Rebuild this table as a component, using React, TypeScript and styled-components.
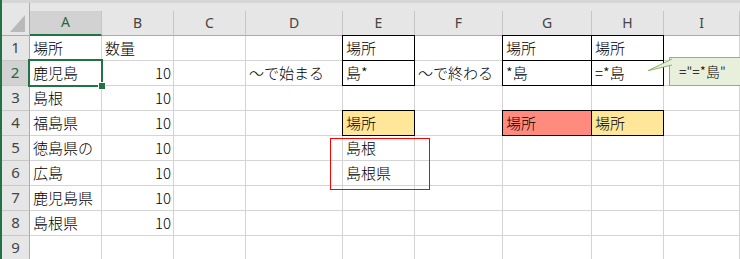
import React from "react";
import styled, { createGlobalStyle, css } from "styled-components";

const Global = createGlobalStyle`
  html, body { margin: 0; padding: 0; background: #fff; }
  body { font-family: "Noto Sans CJK JP", "Noto Sans", sans-serif; }
`;

type Fill = "yellow" | "red";
type CellSpec = { text?: string; num?: boolean; boxed?: boolean; fill?: Fill };

const COLUMNS = ["A", "B", "C", "D", "E", "F", "G", "H", "I"];
const SELECTED_COL = "A";
const SELECTED_ROW = 2;

const FILLS: Record<Fill, string> = {
  yellow: "#ffe699",
  red: "#ff8a7e",
};

// Sheet contents, one object per row keyed by column letter
const ROWS: Record<string, CellSpec>[] = [
  {
    A: { text: "場所" },
    B: { text: "数量" },
    E: { text: "場所", boxed: true },
    G: { text: "場所", boxed: true },
    H: { text: "場所", boxed: true },
  },
  {
    A: { text: "鹿児島" },
    B: { text: "10", num: true },
    D: { text: "～で始まる" },
    E: { text: "島*", boxed: true },
    F: { text: "～で終わる" },
    G: { text: "*島", boxed: true },
    H: { text: "=*島", boxed: true },
  },
  { A: { text: "島根" }, B: { text: "10", num: true } },
  {
    A: { text: "福島県" },
    B: { text: "10", num: true },
    E: { text: "場所", boxed: true, fill: "yellow" },
    G: { text: "場所", boxed: true, fill: "red" },
    H: { text: "場所", boxed: true, fill: "yellow" },
  },
  { A: { text: "徳島県の" }, B: { text: "10", num: true }, E: { text: "島根" } },
  { A: { text: "広島" }, B: { text: "10", num: true }, E: { text: "島根県" } },
  { A: { text: "鹿児島県" }, B: { text: "10", num: true } },
  { A: { text: "島根県" }, B: { text: "10", num: true } },
  {},
];

const Sheet = styled.div`
  position: relative;
  width: 740px;
  height: 259px;
  overflow: hidden;
  box-sizing: border-box;
  border-left: 2px solid #217346;
  background: #e6e6e6;
`;

const TopStrip = styled.div`
  height: 3px;
  background: #d6d6d6;
`;

const Grid = styled.div`
  position: relative;
  display: grid;
  grid-template-columns: 28px 72px 72px 72px 97px 72px 88px 89px 72px 1fr;
  grid-template-rows: 33px repeat(9, 25px);
`;

const Corner = styled.div`
  box-sizing: border-box;
  display: flex;
  align-items: flex-end;
  justify-content: flex-end;
  padding: 0 3px 3px 0;
  border-right: 1px solid #ababab;
  border-bottom: 1px solid #ababab;
`;

const ColHead = styled.div<{ $sel?: boolean }>`
  box-sizing: border-box;
  align-self: end;
  height: 25px;
  display: flex;
  align-items: center;
  justify-content: center;
  padding-bottom: 1px;
  font-family: "Noto Sans", "Noto Sans CJK JP", sans-serif;
  font-size: 14px;
  line-height: 14px;
  border-right: 1px solid #c6c6c6;
  ${(p) =>
    p.$sel
      ? css`
          background: #d2d2d2;
          color: #1e6b41;
          border-bottom: 2px solid #217346;
        `
      : css`
          background: #e6e6e6;
          color: #444;
          border-bottom: 1px solid #ababab;
        `}
`;

const RowHead = styled.div<{ $sel?: boolean }>`
  box-sizing: border-box;
  display: flex;
  align-items: center;
  justify-content: center;
  padding-bottom: 1px;
  font-family: "Noto Sans", "Noto Sans CJK JP", sans-serif;
  font-size: 15px;
  line-height: 15px;
  border-bottom: 1px solid #c8c8c8;
  ${(p) =>
    p.$sel
      ? css`
          background: #d2d2d2;
          color: #1e6b41;
          border-right: 2px solid #217346;
        `
      : css`
          background: #e6e6e6;
          color: #444;
          border-right: 1px solid #ababab;
        `}
`;

const Cell = styled.div<{ $num?: boolean; $boxed?: boolean; $fill?: Fill }>`
  box-sizing: border-box;
  display: flex;
  align-items: center;
  justify-content: ${(p) => (p.$num ? "flex-end" : "flex-start")};
  padding: 0 2px 2px 3px;
  font-size: 15px;
  font-weight: 300;
  line-height: 15px;
  white-space: nowrap;
  color: #000;
  background: ${(p) => (p.$fill ? FILLS[p.$fill] : "#fff")};
  border-right: 1px solid ${(p) => (p.$boxed ? "#000" : "#d4d4d4")};
  border-bottom: 1px solid ${(p) => (p.$boxed ? "#000" : "#d4d4d4")};
  ${(p) =>
    p.$boxed &&
    css`
      box-shadow: -1px 0 0 #000, 0 -1px 0 #000, -1px -1px 0 #000;
    `}
`;

/* Active-cell frame with its fill handle */
const Cursor = styled.div`
  position: absolute;
  left: 26px;
  top: 56px;
  width: 75px;
  height: 28px;
  box-sizing: border-box;
  border: 2px solid #217346;
  pointer-events: none;
`;

const FillHandle = styled.div`
  position: absolute;
  left: 96px;
  top: 79px;
  width: 6px;
  height: 6px;
  background: #217346;
  border: 1px solid #fff;
`;

/* Red frame drawn around the filter result */
const Marquee = styled.div`
  position: absolute;
  left: 328px;
  top: 135px;
  width: 100px;
  height: 52px;
  box-sizing: border-box;
  border: 1px solid #ff0000;
`;

/* Speech-bubble note next to H2 */
const Callout = styled.div`
  position: absolute;
  left: 667px;
  top: 54px;
  width: 100px;
  height: 29px;
  box-sizing: border-box;
  display: flex;
  align-items: center;
  padding: 0 0 2px 9px;
  background: #e8f0dc;
  border: 1px solid #8fb46a;
  font-size: 14px;
  font-weight: 300;
  line-height: 14px;
  color: #000;
  white-space: nowrap;
`;

const CalloutTail = styled.svg`
  position: absolute;
  left: 643px;
  top: 54px;
  overflow: visible;
`;

const CornerMark = () => (
  <svg width="16" height="17" viewBox="0 0 16 17">
    <polygon points="15,0 15,17 0,17" fill="#b9b9b9" />
  </svg>
);

export default function App() {
  return (
    <>
      <Global />
      <Sheet>
        <TopStrip />
        <Grid>
          <Corner>
            <CornerMark />
          </Corner>
          {COLUMNS.map((c) => (
            <ColHead key={c} $sel={c === SELECTED_COL}>
              {c}
            </ColHead>
          ))}
          {ROWS.map((row, i) => (
            <React.Fragment key={i}>
              <RowHead $sel={i + 1 === SELECTED_ROW}>{i + 1}</RowHead>
              {COLUMNS.map((c) => {
                const spec = row[c] ?? {};
                return (
                  <Cell key={c} $num={spec.num} $boxed={spec.boxed} $fill={spec.fill}>
                    {spec.text}
                  </Cell>
                );
              })}
            </React.Fragment>
          ))}
          <Cursor />
          <FillHandle />
          <Marquee />
          <Callout>="=*島"</Callout>
          <CalloutTail width="28" height="16" viewBox="0 0 28 16">
            <polygon points="27,2 3,13.7 27,8" fill="#e8f0dc" />
            <polyline points="27,2 3,13.7 27,8" fill="none" stroke="#8fb46a" strokeWidth="1" />
          </CalloutTail>
        </Grid>
      </Sheet>
    </>
  );
}
